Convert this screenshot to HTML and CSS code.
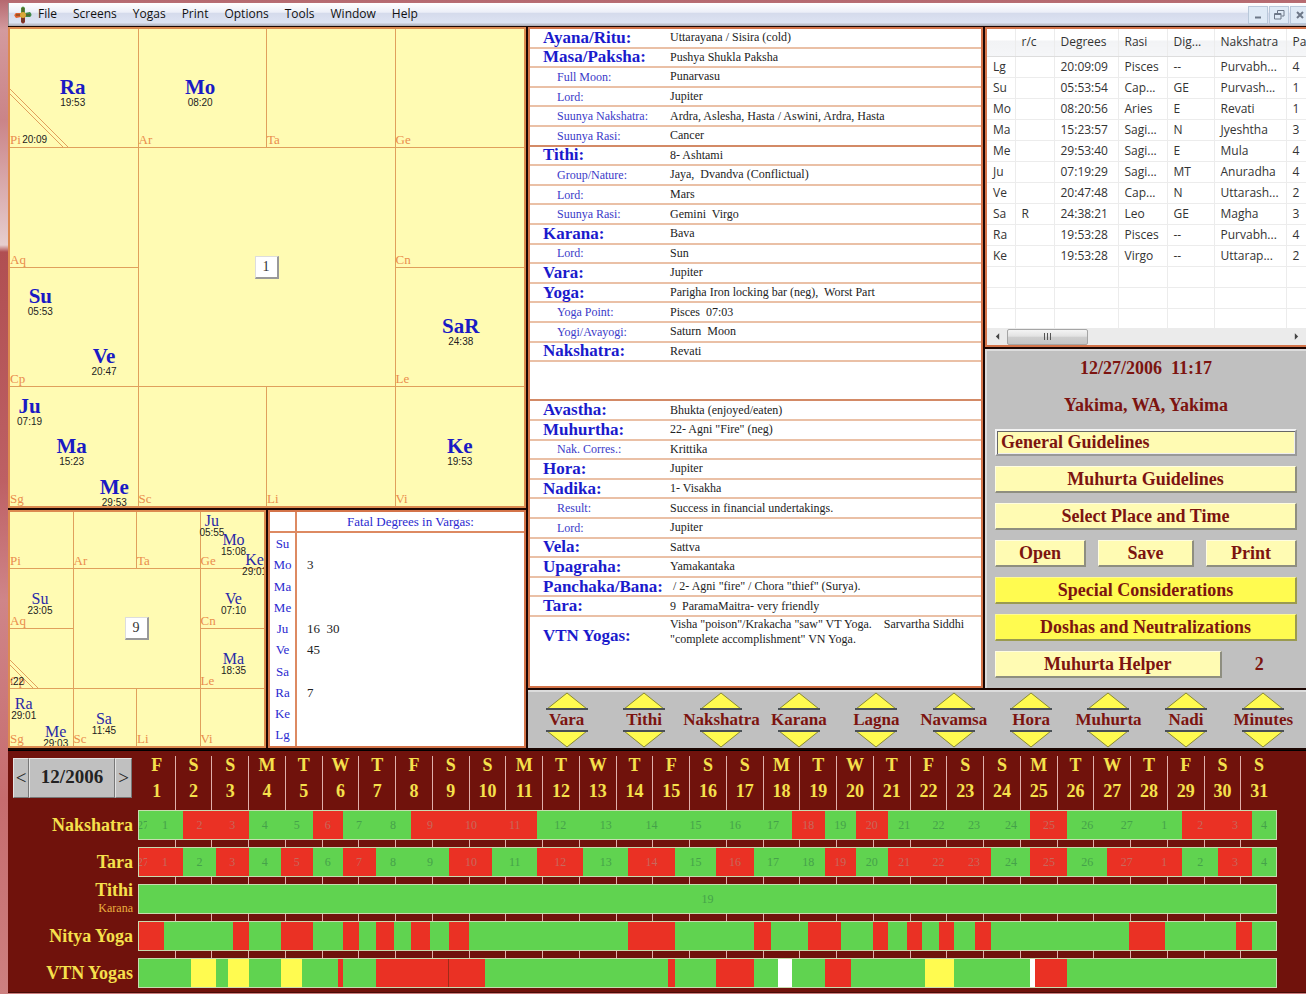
FILE: index.html
```html
<!DOCTYPE html>
<html lang="en">
<head>
    <meta charset="UTF-8">
    <meta name="viewport" content="width=device-width, initial-scale=1.0">
    <title>Muhurta</title>
    <link rel="stylesheet" href="styles.css">
</head>
<body>
    <div class="window">
        <header class="menubar">
            <svg class="logo" viewBox="0 0 18 18" aria-hidden="true">
                <path d="M7 2 Q9 -1 11 2 V7 H7 Z" fill="#4f8f3c"/>
                <path d="M7 16 Q9 19 11 16 V11 H7 Z" fill="#8a3028"/>
                <path d="M2 7 Q-1 9 2 12 L7 11 V7 Z" fill="#e0602c"/>
                <path d="M16 6 Q19 9 16 11 L11 11 V7 Z" fill="#3f8a4a"/>
                <path d="M9 2 V16 M2 9 H16" stroke="#5c4420" stroke-width="1"/>
                <circle cx="9" cy="9" r="3" fill="#d9a838"/>
            </svg>
            <nav class="menu">
                <a href="#">File</a>
                <a href="#">Screens</a>
                <a href="#">Yogas</a>
                <a href="#">Print</a>
                <a href="#">Options</a>
                <a href="#">Tools</a>
                <a href="#">Window</a>
                <a href="#">Help</a>
            </nav>
            <div class="window-buttons">
                <button type="button" aria-label="Minimize"><svg viewBox="0 0 12 12"><path d="M3 8.5 H9" stroke-width="2"/></svg></button>
                <button type="button" aria-label="Restore"><svg viewBox="0 0 12 12"><path d="M4.5 4 V1.5 H11 V7 H8.5 M1.5 4.5 H8 V10 H1.5 Z M1.5 5.5 H8"/></svg></button>
                <button type="button" aria-label="Close"><svg viewBox="0 0 12 12"><path d="M3 3 L9 9 M9 3 L3 9" stroke-width="2"/></svg></button>
            </div>
        </header>

        <main class="workspace">
            <section class="charts">
                <div class="chart chart-large" id="rasi"></div>
                <div class="charts-lower">
                    <div class="chart chart-small" id="navamsa"></div>
                    <div class="fatal">
                        <table>
                            <thead>
                                <tr><th></th><th>Fatal Degrees in Vargas:</th></tr>
                            </thead>
                            <tbody>
                                <tr><th>Su</th><td></td></tr>
                                <tr><th>Mo</th><td>3</td></tr>
                                <tr><th>Ma</th><td></td></tr>
                                <tr><th>Me</th><td></td></tr>
                                <tr><th>Ju</th><td>16&nbsp; 30</td></tr>
                                <tr><th>Ve</th><td>45</td></tr>
                                <tr><th>Sa</th><td></td></tr>
                                <tr><th>Ra</th><td>7</td></tr>
                                <tr><th>Ke</th><td></td></tr>
                                <tr><th>Lg</th><td></td></tr>
                            </tbody>
                        </table>
                    </div>
                </div>
            </section>

            <section class="panels">
                <div class="panels-upper">
                    <dl class="details">
                        <div><dt>Ayana/Ritu:</dt><dd>Uttarayana / Sisira (cold)</dd></div>
                        <div><dt>Masa/Paksha:</dt><dd>Pushya Shukla Paksha</dd></div>
                        <div class="sub"><dt>Full Moon:</dt><dd>Punarvasu</dd></div>
                        <div class="sub"><dt>Lord:</dt><dd>Jupiter</dd></div>
                        <div class="sub"><dt>Suunya Nakshatra:</dt><dd>Ardra, Aslesha, Hasta / Aswini, Ardra, Hasta</dd></div>
                        <div class="sub group-end"><dt>Suunya Rasi:</dt><dd>Cancer</dd></div>
                        <div><dt>Tithi:</dt><dd>8- Ashtami</dd></div>
                        <div class="sub"><dt>Group/Nature:</dt><dd>Jaya,  Dvandva (Conflictual)</dd></div>
                        <div class="sub"><dt>Lord:</dt><dd>Mars</dd></div>
                        <div class="sub"><dt>Suunya Rasi:</dt><dd>Gemini  Virgo</dd></div>
                        <div><dt>Karana:</dt><dd>Bava</dd></div>
                        <div class="sub"><dt>Lord:</dt><dd>Sun</dd></div>
                        <div><dt>Vara:</dt><dd>Jupiter</dd></div>
                        <div><dt>Yoga:</dt><dd>Parigha Iron locking bar (neg),  Worst Part</dd></div>
                        <div class="sub"><dt>Yoga Point:</dt><dd>Pisces  07:03</dd></div>
                        <div class="sub"><dt>Yogi/Avayogi:</dt><dd>Saturn  Moon</dd></div>
                        <div><dt>Nakshatra:</dt><dd>Revati</dd></div>
                        <div class="blank group-end"><dt></dt><dd></dd></div>
                        <div><dt>Avastha:</dt><dd>Bhukta (enjoyed/eaten)</dd></div>
                        <div><dt>Muhurtha:</dt><dd>22- Agni "Fire" (neg)</dd></div>
                        <div class="sub"><dt>Nak. Corres.:</dt><dd>Krittika</dd></div>
                        <div><dt>Hora:</dt><dd>Jupiter</dd></div>
                        <div><dt>Nadika:</dt><dd>1- Visakha</dd></div>
                        <div class="sub"><dt>Result:</dt><dd>Success in financial undertakings.</dd></div>
                        <div class="sub"><dt>Lord:</dt><dd>Jupiter</dd></div>
                        <div><dt>Vela:</dt><dd>Sattva</dd></div>
                        <div><dt>Upagraha:</dt><dd>Yamakantaka</dd></div>
                        <div><dt>Panchaka/Bana:</dt><dd> / 2- Agni "fire" / Chora "thief" (Surya).</dd></div>
                        <div><dt>Tara:</dt><dd>9  ParamaMaitra- very friendly</dd></div>
                        <div class="long"><dt>VTN Yogas:</dt><dd>Visha "poison"/Krakacha "saw" VT Yoga.    Sarvartha Siddhi<br>"complete accomplishment" VN Yoga.</dd></div>
                    </dl>

                    <div class="side">
                        <div class="list">
                            <div class="list-view">
                                <table>
                                    <thead>
                                        <tr>
                                            <th class="col-body"></th>
                                            <th class="col-rc">r/c</th>
                                            <th class="col-degrees">Degrees</th>
                                            <th class="col-rasi">Rasi</th>
                                            <th class="col-dignity">Dig...</th>
                                            <th class="col-nakshatra">Nakshatra</th>
                                            <th class="col-pada">Pa</th>
                                        </tr>
                                    </thead>
                                    <tbody id="positions"></tbody>
                                </table>
                            </div>
                            <div class="scrollbar">
                                <button type="button" class="scroll-arrow" aria-label="Scroll left"><svg viewBox="0 0 6 8"><path d="M5 0 V8 L1 4 Z"/></svg></button>
                                <div class="scroll-thumb"><i></i><i></i><i></i></div>
                                <button type="button" class="scroll-arrow" aria-label="Scroll right"><svg viewBox="0 0 6 8"><path d="M1 0 V8 L5 4 Z"/></svg></button>
                            </div>
                        </div>

                        <div class="controls">
                            <p>12/27/2006&nbsp; 11:17</p>
                            <p>Yakima, WA, Yakima</p>
                            <input type="text" class="guidelines" aria-label="Guidelines" value="General Guidelines">
                            <button type="button" class="btn">Muhurta Guidelines</button>
                            <button type="button" class="btn">Select Place and Time</button>
                            <div class="btn-row">
                                <button type="button" class="btn">Open</button>
                                <button type="button" class="btn">Save</button>
                                <button type="button" class="btn">Print</button>
                            </div>
                            <button type="button" class="btn btn-alert">Special Considerations</button>
                            <button type="button" class="btn btn-alert">Doshas and Neutralizations</button>
                            <div class="helper">
                                <button type="button" class="btn">Muhurta Helper</button>
                                <span>2</span>
                            </div>
                        </div>
                    </div>
                </div>

                <div class="steppers" id="steppers"></div>
            </section>
        </main>

        <section class="calendar">
            <div class="month">
                <button type="button" aria-label="Previous month">&lt;</button>
                <span>12/2006</span>
                <button type="button" aria-label="Next month">&gt;</button>
            </div>
            <div class="days" id="days"></div>
            <div class="row-label row-1">Nakshatra</div>
            <div class="bar row-1" id="bar-nakshatra"></div>
            <div class="row-label row-2">Tara</div>
            <div class="bar row-2" id="bar-tara"></div>
            <div class="row-label row-3">Tithi<small>Karana</small></div>
            <div class="bar row-3" id="bar-tithi"></div>
            <div class="row-label row-4">Nitya Yoga</div>
            <div class="bar row-4" id="bar-nitya"></div>
            <div class="row-label row-5">VTN Yogas</div>
            <div class="bar row-5" id="bar-vtn"></div>
        </section>
    </div>

    <script src="script.js"></script>
</body>
</html>
```
FILE: styles.css
```css
* {
    margin: 0;
    padding: 0;
    box-sizing: border-box;
}

body {
    font-family: 'Liberation Serif', serif;
    background: #c9a2a4;
    min-height: 100vh;
    overflow-x: hidden;
}

button {
    font: inherit;
    color: inherit;
    cursor: pointer;
}

.window {
    min-height: 100vh;
    padding: 3px 0 2px 8px;
    background: linear-gradient(180deg, #b5696f 0, #d39a9e 30px, #ca8488 120px, #e6cdce 245px, #b04f52 252px, #bd6064 480px, #cf8589 600px, #c66c6e 800px, #cd8080 100%);
}

/* menu bar */
.menubar {
    display: flex;
    align-items: center;
    height: 23px;
    padding-left: 5px;
    background: linear-gradient(180deg, #fff 0%, #eceff8 40%, #d5dbec 45%, #dde3f2 85%, #a9a9b0 100%);
    border-left: 1px solid #999;
    font-family: 'Open Sans', 'Noto Sans', sans-serif;
    font-size: 12px;
    overflow: hidden;
}

.logo {
    width: 18px;
    height: 18px;
}

.menu {
    display: flex;
    gap: 16px;
    margin-left: 6px;
    line-height: 16px;
    padding-bottom: 2px;
}

.menu a {
    color: #111;
    text-decoration: none;
}

.window-buttons {
    display: flex;
    gap: 1px;
    margin-left: auto;
    margin-right: -4px;
}

.window-buttons button {
    width: 20px;
    height: 18px;
    background: #dfeaf6;
    border: 1px solid #b9c8da;
    line-height: 0;
}

.window-buttons svg {
    width: 12px;
    height: 12px;
    fill: none;
    stroke: #6d7888;
}

/* main area */
.workspace {
    display: grid;
    grid-template-columns: 518fr 778fr;
    gap: 2px;
    padding: 1px 0 2px 0;
    background: #1c0602;
}

.charts, .panels, .side {
    display: flex;
    flex-direction: column;
    gap: 2px;
    min-width: 0;
}

.chart, .details, .list, .fatal {
    border: 2px solid #d4744a;
}

.chart {
    display: grid;
    grid-template-columns: repeat(4, 1fr);
    grid-template-rows: repeat(4, 1fr);
    position: relative;
    background: #fffbb3;
    border-color: #dc8a50;
    overflow: hidden;
}

.chart-large {
    height: 481px;
}

.chart-small {
    grid-template-rows: 57fr 60fr 60fr 57fr;
}

.sign {
    display: flex;
    align-items: flex-end;
    position: relative;
    border-right: 1px solid #e0a05c;
    border-bottom: 1px solid #e0a05c;
    color: #ea8c4c;
    font-size: 13px;
    line-height: 14px;
}

.col-4 { border-right: 0; }
.line-4 { border-bottom: 0; }

.center {
    grid-area: 2 / 2 / 4 / 4;
    display: grid;
    place-items: center;
    border-right: 1px solid #e0a05c;
    border-bottom: 1px solid #e0a05c;
}

.center button {
    width: 24px;
    height: 23px;
    background: #fff;
    border: 1px solid #ddd;
    border-right: 2px solid #999;
    border-bottom: 2px solid #999;
    font-size: 14px;
    line-height: 14px;
    color: #333;
}

.lagna {
    position: absolute;
    left: 0;
    bottom: 0;
    stroke: #e0a05c;
    fill: none;
}

.planet, .lagna-time {
    position: absolute;
    transform: translate(-50%, -50%);
    text-align: center;
}

.planet b {
    display: block;
    font-size: 21px;
    line-height: 20px;
    color: #1a1ac4;
}

.planet small, .lagna-time {
    display: block;
    font-family: 'Liberation Sans', sans-serif;
    font-size: 10px;
    line-height: 12px;
    color: #222;
}

.chart-small .planet b {
    font-size: 16px;
    line-height: 13px;
    font-weight: normal;
    color: #2a2aa8;
}

.charts-lower {
    display: grid;
    grid-template-columns: 258fr 258fr;
    gap: 2px;
    height: 238px;
}

.fatal {
    background: #fff;
    min-width: 0;
}

.fatal table {
    width: 100%;
    height: 100%;
    border-collapse: collapse;
    font-size: 13px;
    line-height: 14px;
}

.fatal th {
    width: 26px;
    font-weight: normal;
    color: #2a2ad0;
}

.fatal thead th {
    height: 20px;
    border-bottom: 2px solid #dd8a62;
}

.fatal tr > :first-child {
    border-right: 2px solid #dd8a62;
}

.fatal thead th:last-child {
    width: auto;
}

.fatal td {
    padding-left: 10px;
    color: #222;
}

.panels-upper {
    display: grid;
    grid-template-columns: 455fr 321fr;
    gap: 2px;
    flex: 1;
}

/* panchanga details */
.details {
    display: grid;
    grid-template-rows: repeat(30, 1fr) 69px;
    background: #fff;
}

.details div {
    display: grid;
    grid-template-columns: 127px 1fr;
    align-items: center;
    padding-left: 13px;
    border-bottom: 2px solid #eac0a6;
    white-space: nowrap;
    min-height: 0;
}

.details dt {
    font-size: 17px;
    line-height: 16px;
    font-weight: bold;
    color: #1a1acc;
}

.details dd {
    font-size: 12px;
    line-height: 15px;
    white-space: pre;
    color: #222;
}

.details .sub dt {
    padding-left: 14px;
    font-size: 12px;
    font-weight: normal;
    color: #3a3ac8;
}

.details .group-end {
    border-color: #d38a66;
}

.details .blank {
    grid-row: span 2;
}

.details .long {
    align-items: start;
    border-bottom: 0;
}

.details .long dt {
    line-height: 38px;
}

/* planet list */
.list {
    display: flex;
    flex-direction: column;
    height: 320px;
    border-right: 0;
    background: #fff;
    font-family: 'Open Sans', 'Noto Sans', sans-serif;
    font-size: 12px;
    min-width: 0;
}

.list-view {
    flex: 1;
    min-height: 0;
    overflow: hidden;
}

.list table {
    width: 338px;
    table-layout: fixed;
    border-collapse: collapse;
    line-height: 14px;
    color: #333;
}

.list th {
    height: 27px;
    font-weight: normal;
    text-align: left;
    background: linear-gradient(180deg, #fff 40%, #f2f3f5 45%, #f5f6f8 100%);
    border-bottom: 1px solid #ddd;
}

.list th, .list td {
    padding-left: 6px;
    border-right: 1px solid #ececec;
    white-space: nowrap;
}

.list td {
    height: 21px;
    border-bottom: 1px solid #ececec;
}

.col-body { width: 28px; }
.col-rc { width: 39px; }
.col-degrees { width: 64px; }
.col-rasi { width: 49px; }
.col-dignity { width: 47px; }
.col-nakshatra { width: 72px; }

.scrollbar {
    display: flex;
    align-items: center;
    height: 17px;
    background: #ebebeb;
}

.scroll-arrow {
    width: 20px;
    height: 17px;
    border: 0;
    background: none;
    line-height: 0;
}

.scroll-arrow:last-child {
    margin-left: auto;
}

.scroll-arrow svg {
    width: 5px;
    height: 7px;
    fill: #444;
}

.scroll-thumb {
    display: flex;
    justify-content: center;
    align-items: center;
    gap: 2px;
    width: 81px;
    height: 16px;
    background: linear-gradient(180deg, #f4f4f4 0%, #e2e2e2 45%, #cfcfcf 50%, #c4c4c4 100%);
    border: 1px solid #a5a5a5;
    border-radius: 2px;
}

.scroll-thumb i {
    width: 1px;
    height: 7px;
    background: #555;
}

/* date, place and commands */
.controls {
    flex: 1;
    display: flex;
    flex-direction: column;
    gap: 10px;
    padding: 4px 9px 9px 8px;
    background: #c0c0c0;
    border-top: 2px solid #dcdcdc;
    border-left: 2px solid #dcdcdc;
    font-size: 18px;
    font-weight: bold;
    line-height: 27px;
    color: #7c1410;
    text-align: center;
}

.controls p {
    height: 27px;
}

.btn, .guidelines {
    height: 27px;
    width: 100%;
    background: #fffbb3;
    border: 1px solid #fffde0;
    border-right: 2px solid #8e8e80;
    border-bottom: 2px solid #8e8e80;
    line-height: 20px;
}

.guidelines {
    padding-left: 4px;
    border: 2px solid #f4f4f4;
    border-right-color: #999;
    border-bottom-color: #999;
    box-shadow: inset 1px 1px 0 #666, inset -1px -1px 0 #eee;
    font: inherit;
    color: inherit;
}

.btn-alert {
    background: #fffb50;
    border-color: #fffb90 #9a9a50 #9a9a50 #fffb90;
}

.btn-row {
    display: grid;
    grid-template-columns: 91fr 96fr 91fr;
    gap: 12px;
}

.helper {
    display: grid;
    grid-template-columns: 3fr 1fr;
    height: 27px;
}

/* up/down steppers */
.steppers {
    display: grid;
    grid-template-columns: repeat(10, 1fr);
    height: 58px;
    padding-right: 4px;
    background: #c0c0c0;
    border-top: 2px solid #dcdcdc;
}

.stepper {
    display: flex;
    flex-direction: column;
    align-items: center;
    justify-content: space-between;
    min-width: 0;
    color: #7c1410;
    font-size: 17px;
    font-weight: bold;
    line-height: 18px;
    white-space: nowrap;
}

.stepper button {
    width: 42px;
    height: 18px;
    border: 0;
    background: none;
    line-height: 0;
}

.stepper svg {
    width: 42px;
    height: 18px;
    fill: #fffb50;
    stroke: #8a8a30;
}

.stepper .base {
    stroke: #4a5055;
    stroke-width: 2;
}

/* month calendar */
.calendar {
    display: grid;
    grid-template-columns: 125px 1fr;
    grid-template-rows: 47px repeat(5, 30px);
    row-gap: 7px;
    column-gap: 5px;
    padding: 5px 29px 4px 0;
    background: #70120c;
    border-top: 1px solid #000;
    border-bottom: 1px solid #4a0c08;
}

.month {
    grid-area: 1 / 1;
    display: grid;
    grid-template-columns: 16px 1fr 17px;
    width: 119px;
    height: 40px;
    margin: 2px 0 0 5px;
    font-weight: bold;
    font-size: 19px;
    line-height: 36px;
    text-align: center;
    color: #222;
}

.month button, .month span {
    background: #c0c0c0;
    border: 1px solid #e4e4e4;
    border-right-color: #777;
    border-bottom-color: #777;
}

.month button {
    font-weight: normal;
}

.days {
    grid-area: 1 / 2 / -1 / 3;
    display: grid;
    grid-template-columns: repeat(31, 1fr);
}

.day {
    border-left: 1px solid #e0b0ac;
    font-size: 18px;
    font-weight: bold;
    text-align: center;
    color: #f6e04c;
}

.day:first-child {
    border-left-color: transparent;
}

.day span {
    display: block;
    height: 26px;
    line-height: 19px;
}

.row-label {
    grid-column: 1;
    align-self: center;
    text-align: right;
    font-size: 18px;
    font-weight: bold;
    line-height: 18px;
    color: #f6e04c;
    white-space: nowrap;
}

.row-label small {
    display: block;
    font-size: 12px;
    font-weight: normal;
    line-height: 18px;
    color: #eab040;
}

.row-1 { grid-row: 2; }
.row-2 { grid-row: 3; }
.row-3 { grid-row: 4; }
.row-4 { grid-row: 5; }
.row-5 { grid-row: 6; }

.bar {
    grid-column: 2;
    display: flex;
    border: 1px solid #c8dcb0;
    overflow: hidden;
}

.segment {
    display: flex;
    align-items: center;
    justify-content: center;
    flex-basis: 0;
    min-width: 0;
    font-size: 12px;
    line-height: 14px;
}

.green { background: #60d350; color: #45a24a; }
.red { background: #ea3124; color: #c8685c; }
.yellow { background: #fffb50; }
.white { background: #fff; }
.seam { background: #a02a18; }
```
FILE: script.js
```js
const signs = [
    ['Pi', 1, 1], ['Ar', 1, 2], ['Ta', 1, 3], ['Ge', 1, 4],
    ['Aq', 2, 1], ['Cn', 2, 4], ['Cp', 3, 1], ['Le', 3, 4],
    ['Sg', 4, 1], ['Sc', 4, 2], ['Li', 4, 3], ['Vi', 4, 4]
];

// name, degrees, x and y in percent of the chart
const rasi = {
    number: 1,
    lagna: { sign: 'Pi', size: 58, time: '20:09', x: 4.8, y: 23.3 },
    planets: [
        ['Ra', '19:53', 12.2, 13.5], ['Mo', '08:20', 37.0, 13.5],
        ['Su', '05:53', 5.9, 57.3], ['Ve', '20:47', 18.3, 69.8],
        ['SaR', '24:38', 87.7, 63.6], ['Ju', '07:19', 3.8, 80.2],
        ['Ma', '15:23', 12.0, 88.7], ['Me', '29:53', 20.3, 97.2],
        ['Ke', '19:53', 87.5, 88.7]
    ]
};

const navamsa = {
    number: 9,
    lagna: { sign: 'Cp', size: 28, time: ':22', x: 2.8, y: 72.5 },
    planets: [
        ['Ju', '05:55', 79.5, 5.8], ['Mo', '15:08', 88.0, 14.2],
        ['Ke', '29:01', 96.3, 22.7], ['Su', '23:05', 11.8, 39.4],
        ['Ve', '07:10', 88.0, 39.4], ['Ma', '18:35', 88.0, 65.0],
        ['Ra', '29:01', 5.4, 84.0], ['Me', '29:03', 18.0, 96.2],
        ['Sa', '11:45', 37.0, 90.4]
    ]
};

function drawChart(id, data) {
    let html = '';
    const l = data.lagna;

    signs.forEach(([name, row, col]) => {
        const s = l.size;
        const mark = name === l.sign
            ? `<svg class="lagna" width="${s}" height="${s}"><path d="M0 0 L${s} ${s} M0 5 L${s - 5} ${s}"/></svg>`
            : '';
        html += `<div class="sign col-${col} line-${row}" style="grid-area: ${row} / ${col}">${mark}${name}</div>`;
    });

    html += `<div class="center"><button type="button">${data.number}</button></div>`;
    html += `<span class="lagna-time" style="left: ${l.x}%; top: ${l.y}%">${l.time}</span>`;

    data.planets.forEach(([name, degrees, x, y]) => {
        html += `<div class="planet" style="left: ${x}%; top: ${y}%"><b>${name}</b><small>${degrees}</small></div>`;
    });

    document.getElementById(id).innerHTML = html;
}

drawChart('rasi', rasi);
drawChart('navamsa', navamsa);

// Planet list
const positions = [
    ['Lg', '', '20:09:09', 'Pisces', '--', 'Purvabh...', '4'],
    ['Su', '', '05:53:54', 'Cap...', 'GE', 'Purvash...', '1'],
    ['Mo', '', '08:20:56', 'Aries', 'E', 'Revati', '1'],
    ['Ma', '', '15:23:57', 'Sagi...', 'N', 'Jyeshtha', '3'],
    ['Me', '', '29:53:40', 'Sagi...', 'E', 'Mula', '4'],
    ['Ju', '', '07:19:29', 'Sagi...', 'MT', 'Anuradha', '4'],
    ['Ve', '', '20:47:48', 'Cap...', 'N', 'Uttarash...', '2'],
    ['Sa', 'R', '24:38:21', 'Leo', 'GE', 'Magha', '3'],
    ['Ra', '', '19:53:28', 'Pisces', '--', 'Purvabh...', '4'],
    ['Ke', '', '19:53:28', 'Virgo', '--', 'Uttarap...', '2'],
    ['', '', '', '', '', '', ''],
    ['', '', '', '', '', '', ''],
    ['', '', '', '', '', '', '']
];

document.getElementById('positions').innerHTML = positions
    .map(row => '<tr>' + row.map(cell => `<td>${cell}</td>`).join('') + '</tr>')
    .join('');

// Steppers
const steps = ['Vara', 'Tithi', 'Nakshatra', 'Karana', 'Lagna', 'Navamsa', 'Hora', 'Muhurta', 'Nadi', 'Minutes'];

document.getElementById('steppers').innerHTML = steps.map(name => `
    <div class="stepper">
        <button type="button" aria-label="Next ${name}"><svg viewBox="0 0 42 18"><path d="M1 17 L21 1 L41 17 Z"/><path class="base" d="M0 17 H42"/></svg></button>
        <span>${name}</span>
        <button type="button" aria-label="Previous ${name}"><svg viewBox="0 0 42 18"><path d="M1 1 L21 17 L41 1 Z"/><path class="base" d="M0 1 H42"/></svg></button>
    </div>`).join('');

// Calendar header, the month starts on a Friday
const weekdays = 'FSSMTWT';
let days = '';
for (let d = 1; d <= 31; d++) {
    days += `<div class="day"><span>${weekdays[(d - 1) % 7]}</span><span>${d}</span></div>`;
}
document.getElementById('days').innerHTML = days;

// Bars: each segment is color, end position (scale 0 to 1139), label
const colors = { g: 'green', r: 'red', y: 'yellow', w: 'white', s: 'seam' };

function drawBar(id, segments) {
    let start = 0;
    document.getElementById(id).innerHTML = segments.map(([color, end, label]) => {
        const size = end - start;
        start = end;
        return `<div class="segment ${colors[color]}" style="flex-grow: ${size}">${label || ''}</div>`;
    }).join('');
}

const moonEnds = [8, 44, 77, 110, 142, 174, 204, 237, 272, 311, 354, 399, 445, 490, 537, 578,
    616, 654, 687, 718, 750, 783, 819, 854, 893, 930, 970, 1009, 1045, 1081, 1115, 1139];
const nakshatraColors = 'ggrrggrggrrrggggggrgrggggrgggrrg';
const taraColors = 'rrgrgrgrggrgrgrgrggrgrrrgrgrrgrg';

function moonBar(colorKeys) {
    return moonEnds.map((end, i) => [colorKeys[i], end, (i + 26) % 27 + 1]);
}

drawBar('bar-nakshatra', moonBar(nakshatraColors));
drawBar('bar-tara', moonBar(taraColors));
drawBar('bar-tithi', [['g', 1139, '19']]);
drawBar('bar-nitya', [
    ['r', 25], ['g', 94], ['r', 110], ['g', 142], ['r', 174], ['g', 204], ['r', 220], ['g', 237],
    ['r', 255], ['g', 272], ['r', 292], ['g', 311], ['r', 331], ['g', 490], ['r', 537], ['g', 616],
    ['r', 633], ['g', 670], ['r', 703], ['g', 735], ['r', 750], ['g', 769], ['r', 784], ['g', 801],
    ['r', 816], ['g', 837], ['r', 854], ['g', 992], ['r', 1028], ['g', 1099], ['r', 1115], ['g', 1139]
]);
drawBar('bar-vtn', [
    ['g', 52], ['y', 77], ['g', 89], ['y', 110], ['g', 142], ['y', 163], ['g', 199], ['r', 204],
    ['g', 237], ['r', 310], ['s', 311], ['r', 347], ['g', 530], ['r', 537], ['g', 578], ['r', 616],
    ['g', 640], ['w', 654], ['g', 687], ['r', 713], ['g', 787], ['y', 816], ['g', 893], ['w', 898],
    ['r', 930], ['g', 1139]
]);
```
